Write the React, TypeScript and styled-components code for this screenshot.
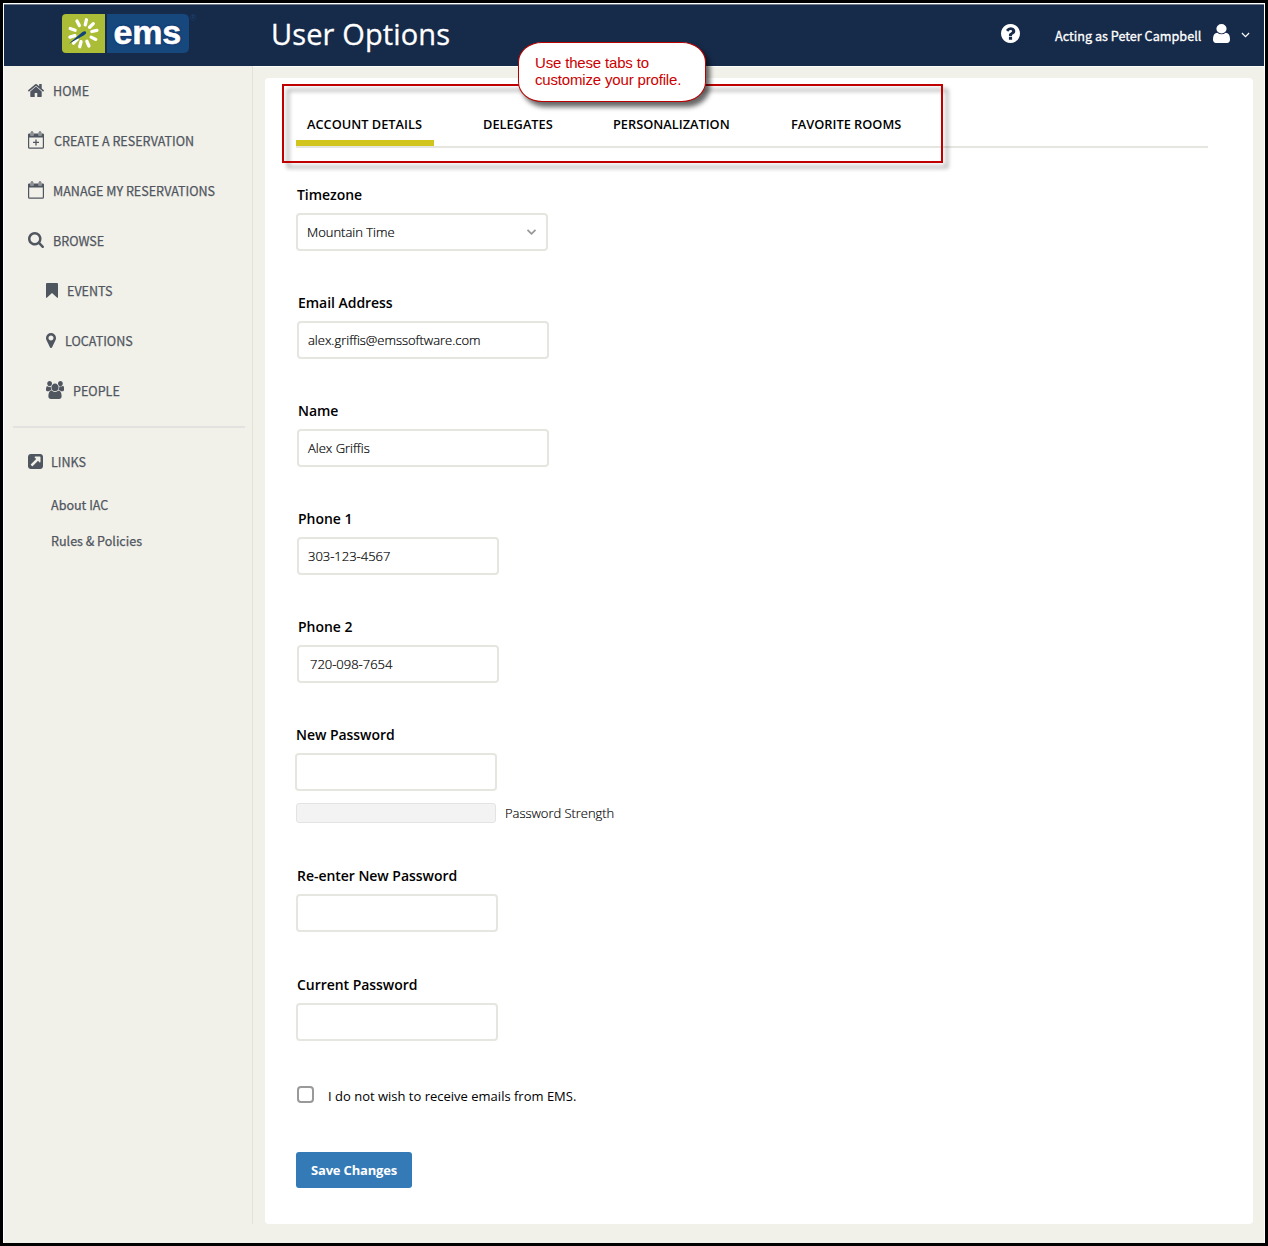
import React from "react";
import styled, { createGlobalStyle } from "styled-components";

const GlobalStyle = createGlobalStyle`
  *, *::before, *::after { box-sizing: border-box; }
  body { margin: 0; background: #000; }
`;

const sans = `"Open Sans", "Noto Sans", sans-serif`;
const menuFont = `"Noto Sans CJK SC", "Noto Sans", sans-serif`;

const Frame = styled.div`
  width: 1268px;
  height: 1246px;
  border: 3px solid #000;
  background: #f1f0e9;
  display: flex;
  flex-direction: column;
  position: relative;
  box-shadow: inset 1px 1px 0 #fff, inset -1px 0 0 #fff;
  padding: 1px 1px 0;
  font-family: ${sans};
  color: #000;
`;

const Header = styled.header`
  height: 62px;
  flex: none;
  display: flex;
  align-items: center;
  background: #162a4a;
  border-top: 1px solid #6f7a8c;
  padding: 0 14px 4px 58px;
  color: #fff;
`;

const Logo = styled.div`
  display: flex;
  align-items: center;
  height: 39px;
  width: 127px;
  gap: 2px;
  flex: none;
`;

const LogoMark = styled.svg`
  display: block;
  background: #abbd36;
  border-radius: 4px 0 0 4px;
`;

const LogoWord = styled.div`
  width: 82px;
  height: 39px;
  border-radius: 0 5px 5px 0;
  background: #16477d;
  font: bold 34px/37px "Liberation Sans", Arial, sans-serif;
  padding-left: 6.5px;
  letter-spacing: -0.2px;
  text-shadow: 0 0 2px #0e2a66, 0 0 2px #0e2a66;
  -webkit-text-stroke: 0.6px #fff;
`;

const Registered = styled.span`
  font: 9px/10px "Liberation Sans", Arial, sans-serif;
  color: #1d4273;
  align-self: flex-start;
  margin: 8px 0 0 1px;
  width: 8px;
`;

const Title = styled.h1`
  margin: 0 auto 0 73px;
  font-size: 29px;
  font-weight: 400;
  line-height: 40px;
  letter-spacing: 0.12px;
  -webkit-text-stroke: 0.3px #fff;
`;

const Account = styled.div`
  display: flex;
  align-items: center;
  padding-top: 2px;
  font: 400 12.65px/20px ${menuFont};
`;

const HelpWrap = styled.span`
  display: flex;
  margin: 0 35px 2px 0;
`;

const UserName = styled.span`
  width: 146px;
  margin: 2px 12px 0 0;
  white-space: nowrap;
  -webkit-text-stroke: 0.3px #fff;
`;

const UserWrap = styled.span`
  display: flex;
  margin: 0 11px 3px 0;
`;

const MenuArrow = styled.span`
  display: flex;
  padding-top: 1px;
`;

const Body = styled.div`
  flex: 1;
  display: flex;
  align-items: flex-start;
`;

const Sidebar = styled.nav`
  width: 249px;
  height: 1158px;
  border-right: 1px solid #e2e2dd;
  padding-top: 13px;
  font: 400 12.55px/24px ${menuFont};
  color: #505660;
  -webkit-text-stroke: 0.25px #505660;
`;

const NavItem = styled.a<{ $indent?: number; $gap?: number; $after?: number }>`
  display: flex;
  align-items: center;
  height: 24px;
  margin-bottom: ${(p) => p.$after ?? 26}px;
  padding-left: ${(p) => p.$indent ?? 24}px;
  gap: ${(p) => p.$gap ?? 9}px;
  white-space: nowrap;
`;

const NavIcon = styled.span`
  display: flex;
  margin-bottom: 2px;
`;

const Divider = styled.hr`
  border: 0;
  height: 2px;
  margin: -3px 7px 22px 9px;
  background: #e2e2e0;
`;

const SubLink = styled.a`
  display: block;
  padding-left: 47px;
  height: 36px;
  line-height: 24px;
`;

const Content = styled.div`
  flex: 1;
  border-top: 1px solid #fdfdfb;
  padding: 11px 0 0 12px;
`;

const Card = styled.main`
  width: 988px;
  height: 1146px;
  background: #fff;
  border-radius: 4px;
  padding: 6px 0 0 30px;
`;

const TabArea = styled.div`
  position: relative;
  height: 79px;
`;

const Tabs = styled.div`
  display: flex;
  width: 912px;
  height: 64px;
  margin-left: 1px;
  padding-top: 30px;
  border-bottom: 2px solid #e5e6e0;
`;

const Tab = styled.button<{ $active?: boolean; $width: number }>`
  width: ${(p) => p.$width}px;
  height: 32px;
  flex: none;
  border: 0;
  border-bottom: 6px solid ${(p) => (p.$active ? "#d1c41d" : "transparent")};
  background: none;
  padding: 0 0 6px 11px;
  margin-right: 38px;
  text-align: left;
  white-space: nowrap;
  font: 600 12.8px/19px ${sans};
  color: #000;
`;

const Highlight = styled.div`
  position: absolute;
  left: -13px;
  top: 0;
  width: 661px;
  height: 79px;
  border: 2px solid #c00000;
  filter: drop-shadow(5px 5px 2px rgba(0, 0, 0, 0.4));
  pointer-events: none;
`;

const Callout = styled.div`
  position: absolute;
  left: 223px;
  top: -42px;
  width: 188px;
  height: 60px;
  border: 1px solid #b80000;
  border-radius: 24px / 20px;
  background: #fff;
  box-shadow: 4px 5px 5px rgba(0, 0, 0, 0.6);
  padding: 11px 0 0 16px;
  font: 15px/17px "Liberation Sans", Arial, sans-serif;
  letter-spacing: -0.17px;
  color: #cc0000;
  white-space: nowrap;
`;

const Form = styled.form`
  padding-top: 22px;
  display: flex;
  flex-direction: column;
`;

const Field = styled.div<{ $shift?: number; $after?: number }>`
  padding-left: ${(p) => p.$shift ?? 2}px;
  margin-bottom: ${(p) => p.$after ?? 42}px;
`;

const Label = styled.label`
  display: block;
  height: 20px;
  margin: 0 0 8px 1px;
  font: 600 14px/20px ${sans};
  letter-spacing: -0.04px;
`;

const Box = styled.div<{ $width: number; $pad?: number }>`
  display: flex;
  align-items: center;
  justify-content: space-between;
  width: ${(p) => p.$width}px;
  height: 38px;
  border: 2px solid #e5e6e0;
  border-radius: 4px;
  padding: 0 9px 0 ${(p) => p.$pad ?? 9}px;
  font: 300 13px/20px ${sans};
  letter-spacing: -0.02px;
  -webkit-text-stroke: 0.2px #000;
`;

const Strength = styled.div`
  display: flex;
  align-items: center;
  gap: 9px;
  margin: 12px 0 0 1px;
  font: 300 13px/20px ${sans};
  letter-spacing: -0.04px;
  -webkit-text-stroke: 0.15px #000;
`;

const StrengthBar = styled.span`
  width: 200px;
  height: 20px;
  border: 1px solid #e3e3e3;
  border-radius: 3px;
  background: #f3f3f3;
`;

const OptOut = styled.label`
  display: flex;
  align-items: center;
  height: 20px;
  margin: 3px 0 0 2px;
  font: 400 13px/20px ${sans};
`;

const Check = styled.span`
  width: 17px;
  height: 17px;
  margin: 0 14px 3px 0;
  border: 2px solid #999;
  border-radius: 4px;
`;

const Save = styled.button`
  width: 116px;
  height: 36px;
  margin: 46px 0 0 1px;
  padding: 0;
  border: 0;
  border-radius: 3px;
  background: #337ab7;
  color: #fff;
  font: 700 13px/20px ${sans};
  letter-spacing: -0.18px;
`;

type GlyphProps = { w: number; h: number; box: string; d: string };
const Glyph = ({ w, h, box, d }: GlyphProps) => (
  <svg width={w} height={h} viewBox={box} preserveAspectRatio="none" fill="currentColor">
    <path d={d} />
  </svg>
);

const icons = {
  home: {
    w: 16, h: 13, box: "89 253 1614 1283",
    d: "M1472 992v480q0 26-19 45t-45 19h-384v-384h-256v384h-384q-26 0-45-19t-19-45v-480q0-1 .5-3t.5-3l575-474 575 474q1 2 1 6zm223-69l-62 74q-8 9-21 11h-3q-13 0-21-7l-692-577-692 577q-12 8-24 7-13-2-21-11l-62-74q-8-10-7-23.5t11-21.5l719-599q32-26 76-26t76 26l244 204v-195q0-14 9-23t23-9h192q14 0 23 9t9 23v408l219 182q10 8 11 21.5t-7 23.5z",
  },
  search: {
    w: 16, h: 16, box: "64 128 1664 1664",
    d: "M1216 832q0-185-131.5-316.5t-316.5-131.5-316.5 131.5-131.5 316.5 131.5 316.5 316.5 131.5 316.5-131.5 131.5-316.5zm512 832q0 52-38 90t-90 38q-54 0-90-38l-343-342q-179 124-399 124-143 0-273.5-55.5t-225-150-150-225-55.5-273.5 55.5-273.5 150-225 225-150 273.5-55.5 273.5 55.5 225 150 150 225 55.5 273.5q0 220-124 399l343 343q37 37 37 90z",
  },
  bookmark: {
    w: 12, h: 15, box: "0 0 12 15",
    d: "M1 0H11Q12 0 12 1V14.2Q12 15.2 11.2 14.7L6 9.9L.8 14.7Q0 15.2 0 14.2V1Q0 0 1 0Z",
  },
  marker: {
    w: 10, h: 15, box: "384 128 1024 1536",
    d: "M1152 640q0-106-75-181t-181-75-181 75-75 181 75 181 181 75 181-75 75-181zm256 0q0 109-33 179l-364 774q-16 33-47.5 52t-67.5 19-67.5-19-46.5-52l-365-774q-33-70-33-179 0-212 150-362t362-150 362 150 150 362z",
  },
  people: {
    w: 18, h: 18, box: "0 0 1920 1792",
    d: "M593 896q-162 5-265 128h-134q-82 0-138-40.5t-56-118.5q0-353 124-353 6 0 43.5 21t97.5 42.5 119 21.5q67 0 133-23-5 37-5 66 0 159 93 294zm1071 637q0 120-73 189.5t-194 69.5h-874q-121 0-194-69.5t-73-189.5q0-53 3.5-103.5t14-109 26.5-108.5 43-97.5 62-81 85.5-53.5 111.5-20q10 0 43 21.5t73 48 107 48 135 21.5 135-21.5 107-48 73-48 43-21.5q61 0 111.5 20t85.5 53.5 62 81 43 97.5 26.5 108.5 14 109 3.5 103.5zm-1024-1277q0 106-75 181t-181 75-181-75-75-181 75-181 181-75 181 75 75 181zm704 384q0 159-112.5 271.5t-271.5 112.5-271.5-112.5-112.5-271.5 112.5-271.5 271.5-112.5 271.5 112.5 112.5 271.5zm576 225q0 78-56 118.5t-138 40.5h-134q-103-123-265-128 93-135 93-294 0-29-5-66 66 23 133 23 59 0 119-21.5t97.5-42.5 43.5-21q124 0 124 353zm-128-609q0 106-75 181t-181 75-181-75-75-181 75-181 181-75 181 75 75 181z",
  },
  links: {
    w: 15, h: 15, box: "128 128 1536 1536",
    d: "M1408 928v-480q0-26-19-45t-45-19h-480q-42 0-59 39-17 41 14 70l144 144-534 534q-19 19-19 45t19 45l102 102q19 19 45 19t45-19l534-534 144 144q18 19 45 19 12 0 25-5 39-17 39-59zm256-512v960q0 119-84.5 203.5t-203.5 84.5h-960q-119 0-203.5-84.5t-84.5-203.5v-960q0-119 84.5-203.5t203.5-84.5h960q119 0 203.5 84.5t84.5 203.5z",
  },
  help: {
    w: 19, h: 19, box: "128 128 1536 1536",
    d: "M1024 1376v-192q0-14-9-23t-23-9h-192q-14 0-23 9t-9 23v192q0 14 9 23t23 9h192q14 0 23-9t9-23zm256-672q0-88-55.5-163t-138.5-116-170-41q-243 0-371 213-15 24 8 42l132 100q7 6 19 6 16 0 25-12 53-68 86-92 34-24 86-24 48 0 85.5 26t37.5 59q0 38-20 61t-68 45q-63 28-115.5 86.5t-52.5 125.5v36q0 14 9 23t23 9h192q14 0 23-9t9-23q0-19 21.5-49.5t54.5-49.5q32-18 49-28.5t46-35 44.5-48 28-60.5 12.5-81zm384 192q0 209-103 385.5t-279.5 279.5-385.5 103-385.5-103-279.5-279.5-103-385.5 103-385.5 279.5-279.5 385.5-103 385.5 103 279.5 279.5 103 385.5z",
  },
  user: {
    w: 17, h: 19, box: "256 128 1280 1536",
    d: "M1536 1399q0 109-62.5 187t-150.5 78h-854q-88 0-150.5-78t-62.5-187q0-85 8.5-160.5t31.5-152 58.5-131 94-89 134.5-34.5q131 128 313 128t313-128q76 0 134.5 34.5t94 89 58.5 131 31.5 152 8.5 160.5zm-256-887q0 159-112.5 271.5t-271.5 112.5-271.5-112.5-112.5-271.5 112.5-271.5 271.5-112.5 271.5 112.5 112.5 271.5z",
  },
};

const CalendarIcon = ({ plus }: { plus?: boolean }) => (
  <svg width="16" height="18" viewBox="0 0 16 18" fill="none">
    <path d="M.6 4V16.2Q.6 17.2 1.6 17.2H14.4Q15.4 17.2 15.4 16.2V4" stroke="currentColor" strokeWidth="1.2" />
    <path d="M0 6.5V3.6Q0 2.5 1.1 2.5H2.4V4.6H5.6V2.5H10.4V4.6H13.6V2.5H14.9Q16 2.5 16 3.6V6.5Z" fill="currentColor" />
    <path d="M3.1 4.4V1.7Q3.1.6 4 .6T4.9 1.7V4.4M11.1 4.4V1.7Q11.1.6 12 .6T12.9 1.7V4.4" stroke="currentColor" strokeWidth="1" />
    {plus && <path d="M8 8.4V14.4M5 11.4H11" stroke="currentColor" strokeWidth="1.3" />}
  </svg>
);

const Chevron = ({ color, w, stroke }: { color: string; w: number; stroke: number }) => (
  <svg width={w} height="6" viewBox="0 0 10 6" fill="none">
    <path d="M1 .8L5 4.8L9 .8" stroke={color} strokeWidth={stroke} />
  </svg>
);

const petals = [13, 46, 78, 116, 156, 195, 225, 254, 290, 333];

const EmsLogo = () => (
  <Logo>
    <LogoMark width="43" height="39" viewBox="0 0 43 39">
      {petals.map((angle) => (
        <line key={angle} x1="21.3" y1="10.6" x2="21.3" y2="5.4" stroke="#fff" strokeWidth="3.3"
          strokeLinecap="round" transform={`rotate(${angle} 21.3 19.3)`} />
      ))}
      <path d="M6.8 29.8L20.4 17.9Q23.2 16.6 24.2 18Q24.5 19.9 22 21.2Z" fill="#124479" />
    </LogoMark>
    <LogoWord>ems</LogoWord>
  </Logo>
);

const App = () => (
  <>
    <GlobalStyle />
    <Frame>
      <Header>
        <EmsLogo />
        <Registered>®</Registered>
        <Title>User Options</Title>
        <Account>
          <HelpWrap><Glyph {...icons.help} /></HelpWrap>
          <UserName>Acting as Peter Campbell</UserName>
          <UserWrap><Glyph {...icons.user} /></UserWrap>
          <MenuArrow><Chevron color="#fff" w={9} stroke={1.3} /></MenuArrow>
        </Account>
      </Header>
      <Body>
        <Sidebar>
          <NavItem><NavIcon><Glyph {...icons.home} /></NavIcon>HOME</NavItem>
          <NavItem $gap={10}><NavIcon><CalendarIcon plus /></NavIcon>CREATE A RESERVATION</NavItem>
          <NavItem><NavIcon><CalendarIcon /></NavIcon>MANAGE MY RESERVATIONS</NavItem>
          <NavItem><NavIcon><Glyph {...icons.search} /></NavIcon>BROWSE</NavItem>
          <NavItem $indent={42}><NavIcon><Glyph {...icons.bookmark} /></NavIcon>EVENTS</NavItem>
          <NavItem $indent={42}><NavIcon><Glyph {...icons.marker} /></NavIcon>LOCATIONS</NavItem>
          <NavItem $indent={42}><NavIcon><Glyph {...icons.people} /></NavIcon>PEOPLE</NavItem>
          <Divider />
          <NavItem $gap={8} $after={19}><NavIcon><Glyph {...icons.links} /></NavIcon>LINKS</NavItem>
          <SubLink>About IAC</SubLink>
          <SubLink>Rules &amp; Policies</SubLink>
        </Sidebar>
        <Content>
          <Card>
            <TabArea>
              <Tabs>
                <Tab $width={138} $active>ACCOUNT DETAILS</Tab>
                <Tab $width={92}>DELEGATES</Tab>
                <Tab $width={140}>PERSONALIZATION</Tab>
                <Tab $width={133}>FAVORITE ROOMS</Tab>
              </Tabs>
              <Highlight />
              <Callout>Use these tabs to<br />customize your profile.</Callout>
            </TabArea>
            <Form>
              <Field $shift={1}>
                <Label>Timezone</Label>
                <Box $width={252}>Mountain Time<Chevron color="#999" w={11} stroke={1.8} /></Box>
              </Field>
              <Field><Label>Email Address</Label><Box $width={252}>alex.griffis@emssoftware.com</Box></Field>
              <Field><Label>Name</Label><Box $width={252}>Alex Griffis</Box></Field>
              <Field><Label>Phone 1</Label><Box $width={202}>303-123-4567</Box></Field>
              <Field><Label>Phone 2</Label><Box $width={202} $pad={11}>720-098-7654</Box></Field>
              <Field $shift={0} $after={43}>
                <Label>New Password</Label>
                <Box $width={202} />
                <Strength><StrengthBar />Password Strength</Strength>
              </Field>
              <Field $shift={1} $after={43}><Label>Re-enter New Password</Label><Box $width={202} /></Field>
              <Field $shift={1}><Label>Current Password</Label><Box $width={202} /></Field>
              <OptOut><Check />I do not wish to receive emails from EMS.</OptOut>
              <Save type="button">Save Changes</Save>
            </Form>
          </Card>
        </Content>
      </Body>
    </Frame>
  </>
);

export default App;
